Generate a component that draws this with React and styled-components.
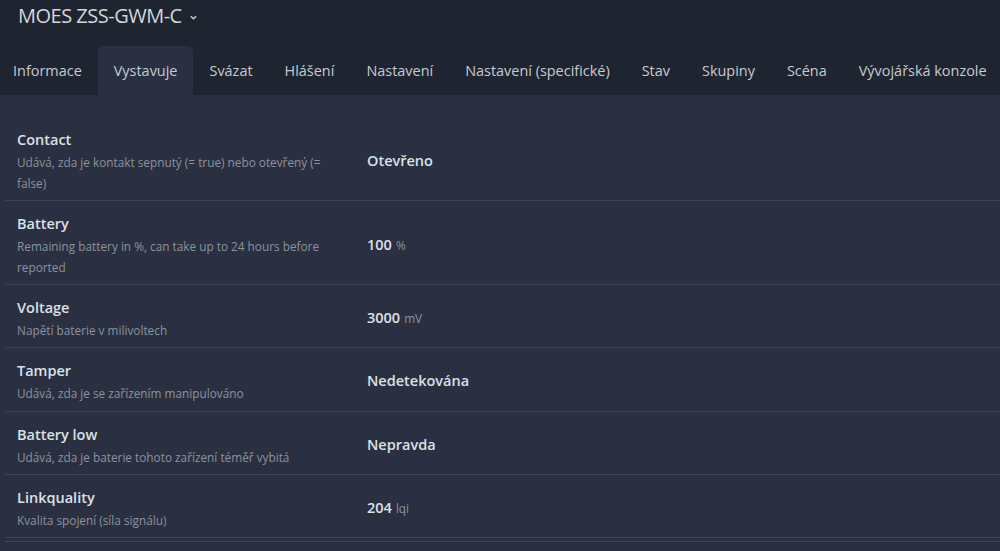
import React from "react";
import styled, { createGlobalStyle } from "styled-components";

const Global = createGlobalStyle`
  html, body { margin: 0; padding: 0; background: #2a3041; }
  body { font-family: "Open Sans", "Noto Sans", sans-serif; }
  * { box-sizing: border-box; }
`;

const Page = styled.div`
  width: 1000px;
  height: 551px;
  overflow: hidden;
  background: #2a3041;
  display: flex;
  flex-direction: column;
`;

const Header = styled.header`
  background: #1f2431;
  display: flex;
  flex-direction: column;
`;

const TitleRow = styled.div`
  height: 46px;
  display: flex;
  align-items: flex-start;
  padding: 2px 0 0 18px;
  gap: 7px;
`;

const DeviceName = styled.h1`
  margin: 0;
  font-size: 20px;
  font-weight: 400;
  line-height: 28px;
  color: #d3d7de;
  letter-spacing: -0.5px;
`;

const Chevron = styled.svg`
  width: 9px;
  height: 9px;
  margin-top: 11px;
  stroke: #c9ced6;
  fill: none;
  stroke-width: 1.6;
`;

const Tabs = styled.nav`
  display: flex;
  height: 49px;
`;

const Tab = styled.div`
  display: flex;
  align-items: center;
  padding: 0 16px;
  font-size: 14.45px;
  color: #c6cbd3;
  border-radius: 5px 5px 0 0;
  background: ${(p) => (p.$active ? "#2a3041" : "transparent")};
  white-space: nowrap;
  &:first-child { padding-left: 13px; }
`;

const Content = styled.main`
  padding: 22px 0 0 5px;
`;

const Table = styled.div`
  display: flex;
  flex-direction: column;
`;

const Row = styled.div`
  display: grid;
  grid-template-columns: 350px 1fr;
  align-items: center;
  border-bottom: 1px solid #3e4557;
`;

const Label = styled.div`
  padding: 11px 12px 6.67px;
`;

const Name = styled.div`
  font-size: 14.5px;
  font-weight: 600;
  line-height: 24px;
  color: #dce0e7;
`;

const Desc = styled.div`
  font-size: 11.8px;
  line-height: 20.67px;
  color: #8c929e;
`;

const Value = styled.div`
  padding: 3px 12px 0;
  font-size: 14.5px;
  font-weight: 600;
  color: #dce0e7;
`;

const Unit = styled.span`
  font-size: 11.8px;
  font-weight: 400;
  color: #8c929e;
  margin-left: 4px;
`;

const Footer = styled.div`
  margin-top: 3px;
  border-top: 1px solid #3e4557;
`;

const tabs = [
  "Informace",
  "Vystavuje",
  "Svázat",
  "Hlášení",
  "Nastavení",
  "Nastavení (specifické)",
  "Stav",
  "Skupiny",
  "Scéna",
  "Vývojářská konzole",
];

const rows = [
  { name: "Contact", desc: "Udává, zda je kontakt sepnutý (= true) nebo otevřený (= false)", value: "Otevřeno" },
  { name: "Battery", desc: "Remaining battery in %, can take up to 24 hours before reported", value: "100", unit: "%" },
  { name: "Voltage", desc: "Napětí baterie v milivoltech", value: "3000", unit: "mV" },
  { name: "Tamper", desc: "Udává, zda je se zařízením manipulováno", value: "Nedetekována" },
  { name: "Battery low", desc: "Udává, zda je baterie tohoto zařízení téměř vybitá", value: "Nepravda" },
  { name: "Linkquality", desc: "Kvalita spojení (síla signálu)", value: "204", unit: "lqi" },
];

export default function App() {
  return (
    <Page>
      <Global />
      <Header>
        <TitleRow>
          <DeviceName>MOES ZSS-GWM-C</DeviceName>
          <Chevron viewBox="0 0 10 10">
            <path d="M2 3.5 L5 6.5 L8 3.5" />
          </Chevron>
        </TitleRow>
        <Tabs>
          {tabs.map((t) => (
            <Tab key={t} $active={t === "Vystavuje"}>{t}</Tab>
          ))}
        </Tabs>
      </Header>
      <Content>
        <Table>
          {rows.map((r) => (
            <Row key={r.name}>
              <Label>
                <Name>{r.name}</Name>
                <Desc>{r.desc}</Desc>
              </Label>
              <Value>
                {r.value}
                {r.unit && <Unit>{r.unit}</Unit>}
              </Value>
            </Row>
          ))}
        </Table>
        <Footer />
      </Content>
    </Page>
  );
}
